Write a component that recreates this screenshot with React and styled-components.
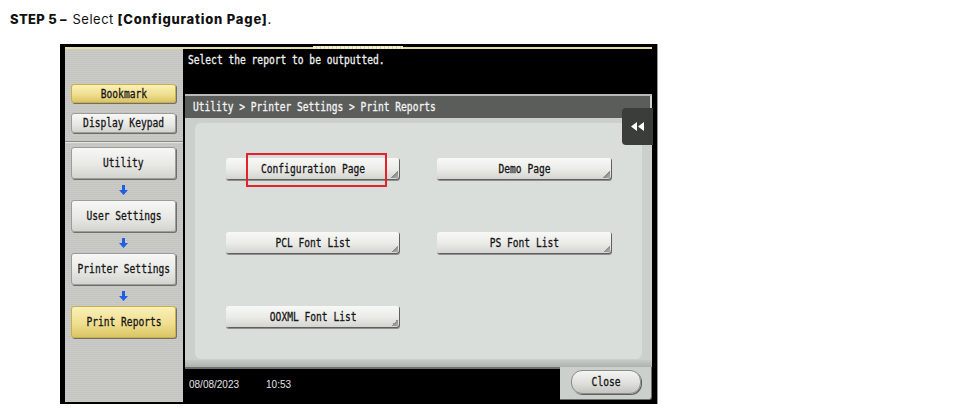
import React from 'react';
import styled, { createGlobalStyle } from 'styled-components';

const GlobalStyle = createGlobalStyle`
  html, body { margin: 0; background: #fff; }
  body { font-family: Inter, "Noto Sans", sans-serif; }
`;

const Page = styled.div`
  width: 979px;
  height: 414px;
  overflow: hidden;
`;

const StepTitle = styled.p`
  margin: 0;
  padding: 11px 0 0 10px;
  font-size: 13px;
  line-height: 16px;
  color: #111;
`;

const Strong = styled.b`
  font-weight: 800;
  letter-spacing: ${p => p.$spread || 0}px;
`;

const Plain = styled.span`
  letter-spacing: 0.5px;
  margin: 0 0 0 2px;
`;

/* printer panel */

const Screen = styled.div`
  box-sizing: border-box;
  width: 598px;
  height: 360px;
  margin: 17px 0 0 60px;
  padding: 3px 5px 4px 5px;
  background: #000;
  border-right: 1px solid #9a9a9a;
  display: flex;
  flex-direction: column;
`;

const TopRule = styled.div`
  height: 2px;
  background: #e6dea2;
  display: flex;
  padding-left: 248px;
`;

const Handle = styled.div`
  width: 90px;
  height: 3px;
  margin-top: -1px;
  background: repeating-linear-gradient(90deg, #f4efc9 0 3px, #d9d1a0 3px 4px);
`;

const Body = styled.div`
  flex: 1;
  display: grid;
  grid-template-columns: 118px 467px;
  column-gap: 2px;
`;

const SideBar = styled.div`
  background: repeating-linear-gradient(#cbcbc7 0 1px, #c3c3bf 1px 2px);
  padding: 35px 7px 0 6px;
  display: flex;
  flex-direction: column;
`;

const Mono = styled.span`
  display: inline-block;
  font-family: "DejaVu Sans Mono", "Liberation Mono", monospace;
  font-size: 12px;
  white-space: nowrap;
  -webkit-text-stroke: 0.3px ${p => p.$color || '#151515'};
  transform: scaleX(0.8);
  transform-origin: ${p => (p.$left ? 'left center' : 'center')};
  color: ${p => p.$color || '#151515'};
`;

const SideButton = styled.div`
  box-sizing: border-box;
  height: ${p => p.$h}px;
  margin-top: ${p => p.$mt || 0}px;
  display: flex;
  align-items: center;
  justify-content: center;
  border-radius: 3px;
  border: 1px solid ${p => (p.$active ? '#c8b044' : '#9c9c98')};
  background: ${p =>
    p.$active
      ? 'linear-gradient(#faf0b8, #efdf90 55%, #dbc466)'
      : 'linear-gradient(#f7f7f5, #e8e8e5 55%, #d3d3cf)'};
  box-shadow: 1px 1px 0 #6e6e6a;
`;

const Divider = styled.div`
  height: 1px;
  margin: 8px -7px 4px -6px;
  background: #8c8c88;
  border-bottom: 1px solid #e2e2de;
`;

const ArrowSlot = styled.div`
  height: 21px;
  display: flex;
  align-items: center;
  justify-content: center;
`;

const Main = styled.div`
  display: flex;
  flex-direction: column;
`;

const Message = styled.div`
  height: 45px;
  padding: 2px 0 0 3px;
  box-sizing: border-box;
  line-height: 14px;
`;

const Panel = styled.div`
  position: relative;
  display: flex;
  flex-direction: column;
`;

const TitleBar = styled.div`
  position: relative;
  height: 22px;
  border-top: 2px solid #b9bbb9;
  background: #5b5d5b;
  display: flex;
  align-items: center;
  padding-left: 8px;

  &::after {
    content: '';
    position: absolute;
    right: 0;
    top: 0;
    width: 2px;
    height: 12px;
    background: #cfd1cf;
  }
`;

const Content = styled.div`
  background: #ccd0cc;
  padding: 5px 10px 1px 10px;
`;

const Sheet = styled.div`
  height: 236px;
  box-sizing: border-box;
  border-radius: 6px;
  background: #dadeda;
  padding: 35px 0 0 31px;
  display: grid;
  grid-template-columns: 174px 175px;
  grid-auto-rows: 22px;
  column-gap: 37px;
  row-gap: 52px;
  align-content: start;
`;

const ReportButton = styled.div`
  position: relative;
  box-sizing: border-box;
  height: 22px;
  display: flex;
  align-items: center;
  justify-content: center;
  border-radius: 3px;
  background: linear-gradient(#f8f8f6, #ebebe8 50%, #d2d2cf);
  box-shadow: inset -1px -1px 0 #5f5f5d, 0 1px 0 #8e8e8b;

  &::after {
    content: '';
    position: absolute;
    right: 2px;
    bottom: 2px;
    width: 7px;
    height: 7px;
    background: linear-gradient(135deg, transparent 50%, #8a8a87 50%, #b4b4b1);
  }
`;

const Highlight = styled.div`
  position: absolute;
  left: 20px;
  top: -5px;
  width: 141px;
  height: 34px;
  box-sizing: border-box;
  border: 2px solid #e3222c;
  pointer-events: none;
`;

const Ledge = styled.div`
  height: 7px;
  background: linear-gradient(#c6cac6, #aeb2ae);
`;

const CollapseTab = styled.div`
  position: absolute;
  top: 14px;
  right: -1px;
  width: 31px;
  height: 37px;
  border-radius: 4px 0 0 4px;
  background: #3b3d3b;
  display: flex;
  align-items: center;
  justify-content: center;
`;

const Footer = styled.div`
  flex: 1;
  display: flex;
`;

const Status = styled.div`
  flex: 1;
  border-top: 2px solid #6c706c;
  display: flex;
  align-items: center;
  gap: 27px;
  padding: 0 0 3px 4px;
  font-family: "Liberation Sans", Arial, sans-serif;
  font-size: 10px;
  color: #e4e4e4;
`;

const CloseTab = styled.div`
  width: 92px;
  box-sizing: border-box;
  background: #ccd0cc;
  border-right: 1px solid #6a6e6a;
  border-bottom: 1px solid #6a6e6a;
  border-radius: 0 0 3px 0;
  padding: 3px 10px 5px 11px;
  margin-bottom: 2px;
`;

const CloseButton = styled.div`
  height: 22px;
  display: flex;
  align-items: center;
  justify-content: center;
  border-radius: 11px;
  border: 1px solid #8a8c8a;
  background: linear-gradient(#f4f4f2, #dfdfdc 55%, #c4c4c1);
  box-shadow: 1px 1px 0 #5f615f;
`;

const DownArrow = () => (
  <svg width="9" height="10" viewBox="0 0 9 10">
    <path d="M3 0h3v5h3L4.5 10 0 5h3z" fill="#1f5fe6" />
  </svg>
);

const RewindIcon = () => (
  <svg width="13" height="9" viewBox="0 0 13 9">
    <path d="M6 0v9L0 4.5zM13 0v9L7 4.5z" fill="#fff" />
  </svg>
);

const trail = ['Utility', 'User Settings', 'Printer Settings', 'Print Reports'];
const reports = ['Configuration Page', 'Demo Page', 'PCL Font List', 'PS Font List', 'OOXML Font List'];

export default function App() {
  return (
    <Page>
      <GlobalStyle />
      <StepTitle>
        <Strong $spread={0.3}>STEP 5 –</Strong> <Plain>Select</Plain> <Strong $spread={0.8}>[Configuration Page]</Strong>.
      </StepTitle>

      <Screen>
        <TopRule>
          <Handle />
        </TopRule>
        <Body>
          <SideBar>
            <SideButton $h={19} $active>
              <Mono>Bookmark</Mono>
            </SideButton>
            <SideButton $h={20} $mt={10}>
              <Mono>Display Keypad</Mono>
            </SideButton>
            <Divider />
            {trail.map((name, i) => (
              <React.Fragment key={name}>
                {i > 0 && (
                  <ArrowSlot>
                    <DownArrow />
                  </ArrowSlot>
                )}
                <SideButton $h={32} $active={i === trail.length - 1}>
                  <Mono>{name}</Mono>
                </SideButton>
              </React.Fragment>
            ))}
          </SideBar>

          <Main>
            <Message>
              <Mono $left $color="#f2f2f2">Select the report to be outputted.</Mono>
            </Message>
            <Panel>
              <TitleBar>
                <Mono $left $color="#f4f4f4">Utility &gt; Printer Settings &gt; Print Reports</Mono>
              </TitleBar>
              <Content>
                <Sheet>
                  {reports.map((name, i) => (
                    <ReportButton key={name}>
                      <Mono>{name}</Mono>
                      {i === 0 && <Highlight />}
                    </ReportButton>
                  ))}
                </Sheet>
              </Content>
              <Ledge />
              <CollapseTab>
                <RewindIcon />
              </CollapseTab>
            </Panel>
            <Footer>
              <Status>
                <span>08/08/2023</span>
                <span>10:53</span>
              </Status>
              <CloseTab>
                <CloseButton>
                  <Mono>Close</Mono>
                </CloseButton>
              </CloseTab>
            </Footer>
          </Main>
        </Body>
      </Screen>
    </Page>
  );
}
